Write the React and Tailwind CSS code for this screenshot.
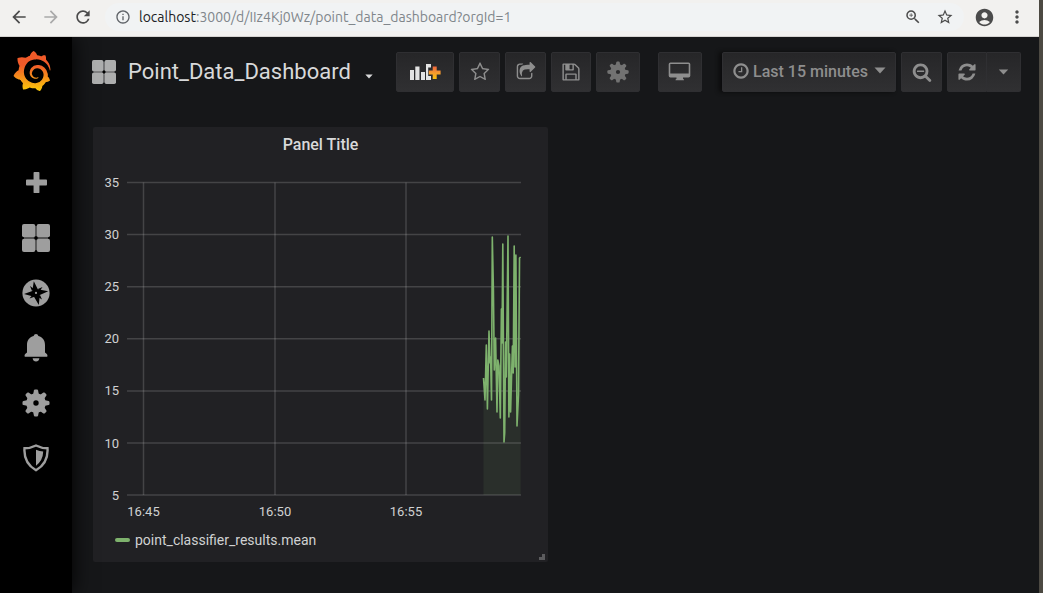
import React from 'react';
import {
  MdArrowBack,
  MdArrowForward,
  MdRefresh,
  MdInfoOutline,
  MdZoomIn,
  MdStarOutline,
  MdAccountCircle,
  MdMoreVert,
} from 'react-icons/md';
import { SiGrafana } from 'react-icons/si';

const PATHS = {
  star: 'M1201 1004l306-297-422-62-189-382-189 382-422 62 306 297-73 421 378-199 377 199zm527-357q0 22-26 48l-363 354 86 500q1 7 1 20 0 50-41 50-19 0-40-12l-449-236-449 236q-22 12-40 12-21 0-31.5-14.5t-10.5-35.5q0-6 2-20l86-500-364-354q-25-27-25-48 0-37 56-46l502-73 225-455q19-41 49-41t49 41l225 455 502 73q56 9 56 46z',
  share: 'M1472 989v259q0 119-84.5 203.5t-203.5 84.5h-832q-119 0-203.5-84.5t-84.5-203.5v-832q0-119 84.5-203.5t203.5-84.5h255q13 0 22.5 9.5t9.5 22.5q0 27-26 32-77 26-133 60-10 4-16 4h-112q-66 0-113 47t-47 113v832q0 66 47 113t113 47h832q66 0 113-47t47-113v-214q0-19 18-29 28-13 54-37 16-16 35-8 21 9 21 29zm237-496l-384 384q-18 19-45 19-12 0-25-5-39-17-39-59v-192h-160q-323 0-438 131-119 137-74 473 3 23-20 34-8 2-12 2-16 0-26-13-10-14-21-31t-39.5-68.5-49.5-99.5-38.5-114-17.5-122q0-49 3.5-91t14-90 28-88 47-81.5 68.5-74 94.5-61.5 124.5-48.5 159.5-30.5 196.5-11h160v-192q0-42 39-59 13-5 25-5 26 0 45 19l384 384q19 19 19 45t-19 45z',
  save: 'M512 1536h768v-384h-768v384zm896 0h128v-896q0-14-10-38.5t-20-34.5l-281-281q-10-10-34-20t-39-10v416q0 40-28 68t-68 28h-576q-40 0-68-28t-28-68v-416h-128v1280h128v-416q0-40 28-68t68-28h832q40 0 68 28t28 68v416zm-384-928v-320q0-13-9.5-22.5t-22.5-9.5h-192q-13 0-22.5 9.5t-9.5 22.5v320q0 13 9.5 22.5t22.5 9.5h192q13 0 22.5-9.5t9.5-22.5zm640 32v928q0 40-28 68t-68 28h-1344q-40 0-68-28t-28-68v-1344q0-40 28-68t68-28h928q40 0 88 20t76 48l280 280q28 28 48 76t20 88z',
  clock: 'M1024 544v448q0 14-9 23t-23 9h-320q-14 0-23-9t-9-23v-64q0-14 9-23t23-9h224v-352q0-14 9-23t23-9h64q14 0 23 9t9 23zm416 352q0-148-73-273t-198-198-273-73-273 73-198 198-73 273 73 273 198 198 273 73 273-73 198-198 73-273zm224 0q0 209-103 385.5t-279.5 279.5-385.5 103-385.5-103-279.5-279.5-103-385.5 103-385.5 279.5-279.5 385.5-103 385.5 103 279.5 279.5 103 385.5z',
  zoomOut: 'M1088 800v64q0 13-9.5 22.5t-22.5 9.5h-576q-13 0-22.5-9.5t-9.5-22.5v-64q0-13 9.5-22.5t22.5-9.5h576q13 0 22.5 9.5t9.5 22.5zm128 32q0-185-131.5-316.5t-316.5-131.5-316.5 131.5-131.5 316.5 131.5 316.5 316.5 131.5 316.5-131.5 131.5-316.5zm512 832q0 53-37.5 90.5t-90.5 37.5q-54 0-90-38l-343-342q-179 124-399 124-143 0-273.5-55.5t-225-150-150-225-55.5-273.5 55.5-273.5 150-225 225-150 273.5-55.5 273.5 55.5 225 150 150 225 55.5 273.5q0 220-124 399l343 343q37 37 37 90z',
  refresh: 'M1639 1056q0 5-1 7-64 268-268 434.5t-478 166.5q-146 0-282.5-55t-243.5-157l-129 129q-19 19-45 19t-45-19-19-45v-448q0-26 19-45t45-19h448q26 0 45 19t19 45-19 45l-137 137q71 66 161 102t187 36q134 0 250-65t186-179q11-17 53-117 8-23 30-23h192q13 0 22.5 9.5t9.5 22.5zm25-800v448q0 26-19 45t-45 19h-448q-26 0-45-19t-19-45 19-45l138-138q-148-137-349-137-134 0-250 65t-186 179q-11 17-53 117-8 23-30 23h-199q-13 0-22.5-9.5t-9.5-22.5v-7q65-268 270-434.5t480-166.5q146 0 284 55.5t245 156.5l130-129q19-19 45-19t45 19 19 45z',
};

function Glyph({ name, className }) {
  return (
    <svg viewBox="0 0 1792 1792" className={className} fill="currentColor" aria-hidden="true">
      <path d={PATHS[name]} />
    </svg>
  );
}

function Caret({ className }) {
  return (
    <svg viewBox="0 0 12 7" className={className} fill="currentColor" aria-hidden="true">
      <path d="M0.5 0.5h11L6 6.5z" />
    </svg>
  );
}

function Gear({ className }) {
  const angles = [0, 45, 90, 135, 180, 225, 270, 315];
  return (
    <svg viewBox="0 0 28 28" className={className} fill="currentColor" aria-hidden="true">
      <path fillRule="evenodd" d="M14 4.2a9.8 9.8 0 1 0 0 19.6a9.8 9.8 0 1 0 0-19.6zM14 11.3a2.7 2.7 0 1 1 0 5.4a2.7 2.7 0 1 1 0-5.4z" />
      {angles.map((a) => (
        <path key={a} transform={`rotate(${a} 14 14)`} d="M11 6l.9-4.6q.2-.9 1.100-.9h2q.9 0 1.100.9L17 6z" />
      ))}
    </svg>
  );
}

function Squares({ className }) {
  return (
    <svg viewBox="0 0 28 28" className={className} fill="currentColor" aria-hidden="true">
      <rect x="2" y="2" width="24" height="24" opacity="0.4" />
      <rect x="0" y="0" width="13.3" height="13.3" rx="2" />
      <rect x="14.7" y="0" width="13.3" height="13.3" rx="2" />
      <rect x="0" y="14.7" width="13.3" height="13.3" rx="2" />
      <rect x="14.7" y="14.7" width="13.3" height="13.3" rx="2" />
      <circle cx="14" cy="14" r="1.700" fill="#000" />
    </svg>
  );
}

function Plus() {
  return (
    <svg viewBox="0 0 20 20" className="size-[21px]" fill="currentColor" aria-hidden="true">
      <path d="M8 0h4q.8 0 .8.8v6.400h6.400q.8 0 .8.800v4q0 .8-.8.8h-6.400v6.400q0 .8-.8.8h-4q-.8 0-.8-.8v-6.400H.8q-.8 0-.8-.8v-4q0-.8.8-.8h6.400V.8Q7.200 0 8 0z" />
    </svg>
  );
}

function Compass() {
  return (
    <svg viewBox="0 0 28 28" className="size-7" aria-hidden="true">
      <circle cx="14" cy="14" r="13.600" fill="currentColor" />
      <g fill="#000">
        <path d="M11.800 2.200L15.800 10.200L26.200 12.200L17.800 16L16.800 26L12 17.800L2 15L10.300 12z" />
        <path d="M8 7l4 3-2 2zM20.500 8l-2.600 4-2-2zM20 20.500l-4-2.500 2-2zM7.500 19.500l3-3.800 2 2z" />
      </g>
      <circle cx="14" cy="13.900" r="1.100" fill="currentColor" />
    </svg>
  );
}

function Bell() {
  return (
    <svg viewBox="0 0 24 28" className="h-7 w-6" fill="currentColor" aria-hidden="true">
      <path d="M12 0q1.900 0 2.400 2.100C18.800 3.200 21 6.600 21 11v7.500l1.800 1.600q.9.900.6 2.100q-.2.500-.8.500H1.400q-.6 0-.8-.5q-.3-1.200.6-2.100L3 18.500V11c0-4.400 2.200-7.800 6.600-8.900Q10.100 0 12 0z" />
      <path d="M8.600 24.200h6.800q-.6 3.300-3.400 3.300t-3.400-3.300z" />
    </svg>
  );
}

function Shield() {
  return (
    <svg viewBox="0 0 26 28" className="h-7 w-[26px]" aria-hidden="true">
      <path d="M13 1.500Q18.500 4.300 24.500 4.300Q25.500 19 13 26.200Q.5 19 1.500 4.300Q7.500 4.300 13 1.500z" fill="none" stroke="currentColor" strokeWidth="2.400" />
      <path d="M13 5.800q3.600 1.500 7.200 1.800Q20 16.500 13 21.800z" fill="currentColor" />
    </svg>
  );
}

function AddPanel() {
  return (
    <svg viewBox="0 0 32 20" className="h-5 w-8" aria-hidden="true">
      <defs>
        <linearGradient id="plus-fill" x1="0" y1="0" x2="0" y2="1">
          <stop offset="0" stopColor="#f0663c" />
          <stop offset="0.5" stopColor="#f59a2f" />
          <stop offset="1" stopColor="#fcc00d" />
        </linearGradient>
      </defs>
      <path fill="#e3e3e3" d="M1 8h4v10H1zM6.300 4.500h4.200V18H6.300zM12 10h4v8h-4zM17 2h5v3.500h-2.800v8.500h2.800V18h-5z" />
      <path fill="url(#plus-fill)" d="M23.700 4.600h4v4h3.900v4h-3.900v4.300h-4v-4.300h-3.900v-4h3.900z" />
    </svg>
  );
}

function Monitor() {
  return (
    <svg viewBox="0 0 24 20" className="h-5 w-6" fill="currentColor" aria-hidden="true">
      <path fillRule="evenodd" d="M2.500 0.500h18q1.800 0 1.800 1.800v11.400q0 1.800-1.800 1.800H15v1.200q1 .3 1 1.500H7.500q0-1.200 1-1.500V15.500h-6Q.7 15.500 .7 13.700V2.300Q.7 .5 2.500 .5zM2.300 2.100v9.400h18.400V2.100z" />
    </svg>
  );
}

function ToolButton({ label, className, children }) {
  return (
    <button
      type="button"
      aria-label={label}
      className={`flex h-10 shrink-0 items-center justify-center border border-[#2f2f32] bg-linear-to-b from-[#262628] to-[#303032] text-[#8e8e8e] ${className}`}
    >
      {children}
    </button>
  );
}

function BrowserBar() {
  return (
    <header className="relative z-20 flex h-[37px] items-center border-b border-[#d5d3d0] bg-[#f2f1ef] pb-[2px] text-[#4b4b4b]">
      <div className="flex w-[105px] shrink-0 items-center gap-3 pl-[9px]">
        <button type="button" aria-label="Back"><MdArrowBack className="size-5" /></button>
        <button type="button" aria-label="Forward" className="text-[#a9a9a9]"><MdArrowForward className="size-5" /></button>
        <button type="button" aria-label="Reload"><MdRefresh className="size-5" /></button>
      </div>
      <div className="flex h-7 min-w-0 grow items-center rounded-full bg-[#f1f3f4] pr-[10px] pl-[10px]">
        <MdInfoOutline className="size-4 shrink-0 text-[#5f6368]" />
        <div className="ml-2 min-w-0 grow font-['Ubuntu','Noto_Sans',sans-serif] text-sm leading-5 text-[#80868b]">
          <span className="text-[#202124]">localhost</span>:3000/d/IIz4Kj0Wz/point_data_dashboard?orgId=1
        </div>
        <button type="button" aria-label="Zoom"><MdZoomIn className="size-[18px]" /></button>
        <button type="button" aria-label="Bookmark" className="ml-[14px]"><MdStarOutline className="size-[18px]" /></button>
      </div>
      <button type="button" aria-label="Profile" className="ml-[10px]"><MdAccountCircle className="size-[21px]" /></button>
      <button type="button" aria-label="Menu" className="mr-3 ml-3"><MdMoreVert className="size-5" /></button>
    </header>
  );
}

const NAV = [
  ['Create', <Plus />],
  ['Dashboards', <Squares className="size-7" />],
  ['Explore', <Compass />],
  ['Alerting', <Bell />],
  ['Configuration', <Gear className="size-7" />],
  ['Server Admin', <Shield />],
];

function Sidebar() {
  return (
    <nav className="z-10 flex w-[72px] shrink-0 flex-col items-center bg-black text-[#9e9e9e] shadow-[0_0_20px_#000]">
      <svg className="absolute size-0" aria-hidden="true">
        <linearGradient id="logo-fill" x1="0" y1="0" x2="0" y2="1">
          <stop offset="0" stopColor="#f05a28" />
          <stop offset="0.35" stopColor="#f15a29" />
          <stop offset="1" stopColor="#fbca0a" />
        </linearGradient>
      </svg>
      <a href="#home" aria-label="Home" className="mt-[14px] mb-16 w-full pl-3">
        <SiGrafana className="size-10" fill="url(#logo-fill)" />
      </a>
      {NAV.map(([label, icon]) => (
        <a key={label} href="#nav" aria-label={label} className="flex h-[55px] w-full items-center justify-center">
          {icon}
        </a>
      ))}
    </nav>
  );
}

function Toolbar() {
  return (
    <div className="flex items-center pt-[14px]">
      <Squares className="size-6 shrink-0 text-[#adaeae]" />
      <button type="button" className="ml-3 flex items-center text-[22px] leading-[42px] text-[#d8d9da]">
        Point_Data_Dashboard
        <Caret className="mt-2 ml-[14px] h-[5px] w-2" />
      </button>
      <div className="ml-auto flex gap-[5px]">
        <ToolButton label="Add panel" className="w-[58px] rounded-xs"><AddPanel /></ToolButton>
        <ToolButton label="Star" className="w-[41px] rounded-xs"><Glyph name="star" className="size-5" /></ToolButton>
        <ToolButton label="Share" className="w-[41px] rounded-xs"><Glyph name="share" className="size-5" /></ToolButton>
        <ToolButton label="Save" className="w-10 rounded-xs"><Glyph name="save" className="size-5" /></ToolButton>
        <ToolButton label="Settings" className="w-11 rounded-xs text-[#727272]"><Gear className="size-[22px]" /></ToolButton>
      </div>
      <ToolButton label="Cycle view mode" className="ml-[18px] w-11 rounded-xs"><Monitor /></ToolButton>
      <ToolButton className="ml-5 w-[174px] rounded-xs shadow-[-3px_0_4px_#0b0b0c]">
        <Glyph name="clock" className="mr-[3px] mb-[3px] size-[18px]" />
        <span className="text-base font-medium">Last 15 minutes</span>
        <Caret className="mb-[3px] ml-[6px] h-[7px] w-3" />
      </ToolButton>
      <ToolButton label="Zoom out" className="ml-[5px] w-[41px] rounded-xs"><Glyph name="zoomOut" className="size-5" /></ToolButton>
      <ToolButton label="Refresh" className="ml-[5px] w-10 rounded-l-xs"><Glyph name="refresh" className="size-5" /></ToolButton>
      <ToolButton label="Refresh interval" className="w-[34px] rounded-r-xs border-l-0"><Caret className="h-[6px] w-[11px]" /></ToolButton>
    </div>
  );
}

const POINTS = [
  [390.5, 215], [392, 237], [393.3, 182], [394.4, 246], [396, 168], [397, 200], [397.6, 194], [398.5, 237],
  [399.3, 74], [400.400, 126], [401.3, 207], [402.6, 175], [404, 249], [404.8, 197], [406, 203], [407.3, 255],
  [408.4, 146], [409, 180], [409.8, 81], [411, 279], [411.7, 270], [412.6, 179], [413.3, 214], [415, 73],
  [415.9, 254], [416.6, 191], [417.6, 249], [419.4, 183], [420.2, 210], [421.2, 83], [422.1, 204], [422.9, 92],
  [424, 263], [425.5, 232], [426.5, 95], [427.6, 94],
];

const Y_TICKS = [35, 30, 25, 20, 15, 10, 5];
const X_TICKS = [['16:45', 50.5], ['16:50', 182], ['16:55', 313]];

function Chart() {
  const line = POINTS.map((p) => p.join(',')).join(' ');
  return (
    <svg viewBox="0 0 455 358" className="w-full" role="img" aria-label="point_classifier_results.mean">
      <g fill="#d0d1d2" fontSize="13">
        {Y_TICKS.map((v, i) => (
          <text key={v} x="26" y={24 + i * 52.1} textAnchor="end">{v}</text>
        ))}
        {X_TICKS.map(([t, x]) => (
          <text key={t} x={x} y="353" textAnchor="middle">{t}</text>
        ))}
      </g>
      <polygon points={`390.5,332 ${line} 427.6,332`} fill="#7eb26d" fillOpacity="0.1" />
      <g stroke="#c8c8c8" strokeOpacity="0.21" strokeWidth="1.500">
        {Y_TICKS.map((v, i) => (
          <line key={v} x1="34" x2="428" y1={19.500 + i * 52.1} y2={19.500 + i * 52.1} />
        ))}
        {X_TICKS.map(([t, x]) => (
          <line key={t} x1={x} x2={x} y1="19.500" y2="332" />
        ))}
      </g>
      <polyline points={line} fill="none" stroke="#7eb26d" strokeWidth="1.600" strokeLinejoin="round" />
    </svg>
  );
}

function Panel() {
  return (
    <section className="relative rounded-xs bg-[#212124]">
      <h2 className="pt-1 pb-1 text-center text-base leading-7 font-medium text-[#d8d9da]">Panel Title</h2>
      <Chart />
      <button type="button" className="ml-[22px] flex h-[41px] items-center gap-[5px] pb-1 text-sm text-[#d0d1d2]">
        <span className="h-1 w-[15px] rounded-xs bg-[#7eb26d]" />
        point_classifier_results.mean
      </button>
      <svg viewBox="0 0 6 6" className="absolute right-[3px] bottom-[2px] size-[6px]" fill="#5c5c5e" aria-hidden="true">
        <path d="M3 0h3v6H0V3h3z" />
      </svg>
    </section>
  );
}

export default function App() {
  return (
    <div className="flex min-h-screen flex-col border-r-4 border-[#4c4942] bg-[#161719] font-[Roboto,sans-serif]">
      <BrowserBar />
      <div className="flex grow">
        <Sidebar />
        <main className="min-w-0 grow pr-[18px] pl-5">
          <Toolbar />
          <div className="mt-[34px] grid grid-cols-2 gap-[18px] pl-px">
            <Panel />
          </div>
        </main>
      </div>
    </div>
  );
}
